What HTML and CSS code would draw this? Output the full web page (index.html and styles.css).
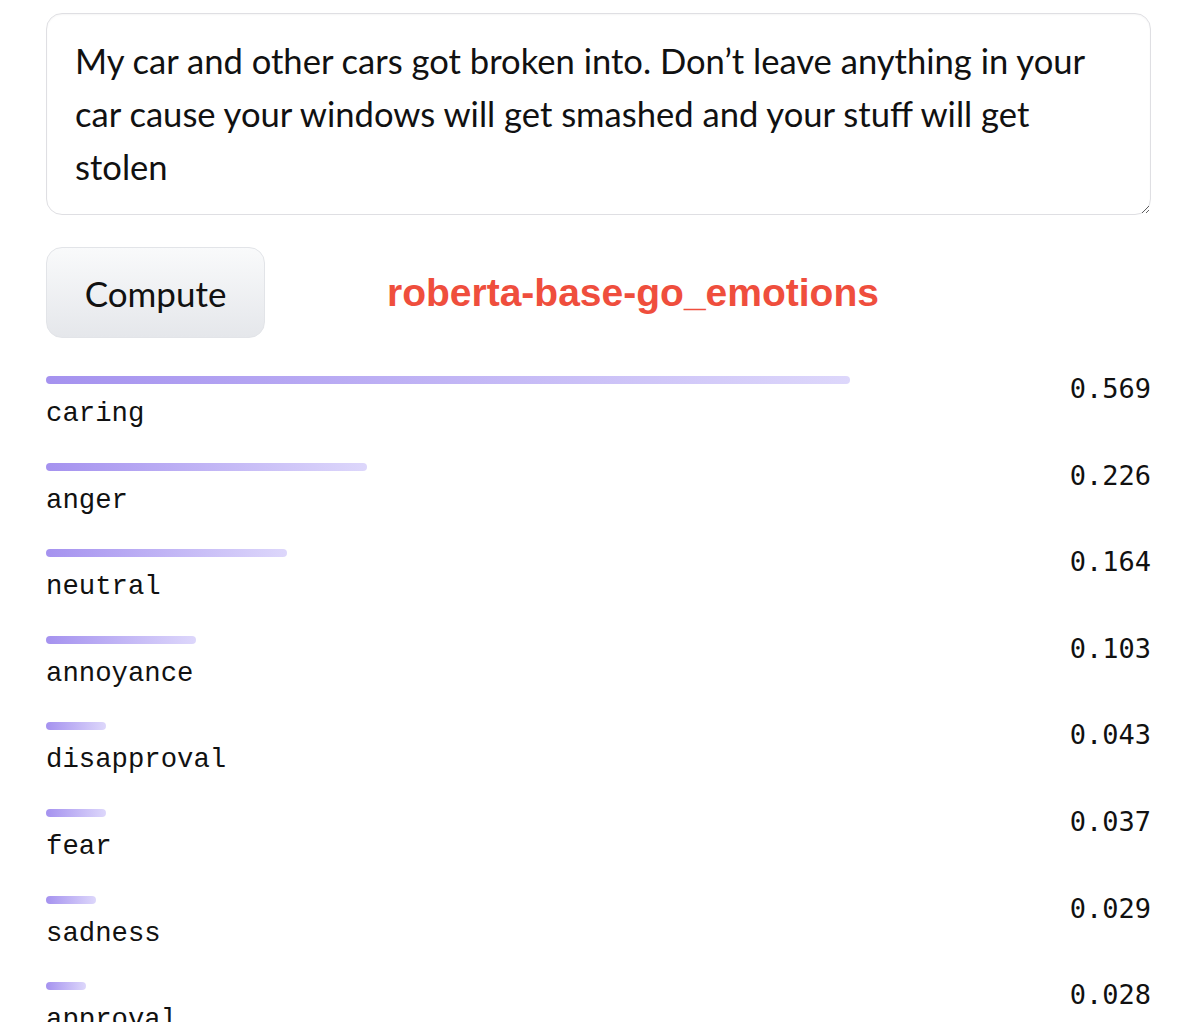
FILE: index.html
```html
<!DOCTYPE html>
<html lang="en">
<head>
<meta charset="utf-8">
<title>roberta-base-go_emotions</title>
<link rel="stylesheet" href="styles.css">
</head>
<body>
<main class="app">
  <textarea class="input" rows="3">My car and other cars got broken into. Don’t leave anything in your
car cause your windows will get smashed and your stuff will get
stolen</textarea>

  <div class="actions">
    <button class="btn" type="button">Compute</button>
    <h2 class="model">roberta-base-go_emotions</h2>
  </div>

  <div class="labels">
    <div class="row">
      <div class="info"><div class="bar" style="width:804px"></div><div class="name">caring</div></div>
      <div class="value">0.569</div>
    </div>
    <div class="row">
      <div class="info"><div class="bar" style="width:321px"></div><div class="name">anger</div></div>
      <div class="value">0.226</div>
    </div>
    <div class="row">
      <div class="info"><div class="bar" style="width:241px"></div><div class="name">neutral</div></div>
      <div class="value">0.164</div>
    </div>
    <div class="row">
      <div class="info"><div class="bar" style="width:150px"></div><div class="name">annoyance</div></div>
      <div class="value">0.103</div>
    </div>
    <div class="row">
      <div class="info"><div class="bar" style="width:60px"></div><div class="name">disapproval</div></div>
      <div class="value">0.043</div>
    </div>
    <div class="row">
      <div class="info"><div class="bar" style="width:60px"></div><div class="name">fear</div></div>
      <div class="value">0.037</div>
    </div>
    <div class="row">
      <div class="info"><div class="bar" style="width:50px"></div><div class="name">sadness</div></div>
      <div class="value">0.029</div>
    </div>
    <div class="row">
      <div class="info"><div class="bar" style="width:40px"></div><div class="name">approval</div></div>
      <div class="value">0.028</div>
    </div>
  </div>
</main>
</body>
</html>
```

FILE: styles.css
```css
html, body {
  margin: 0;
  padding: 0;
  background: #ffffff;
}

.app {
  width: 1105px;
  margin-left: 46px;
  padding-top: 13px;
  display: flex;
  flex-direction: column;
}

.input {
  box-sizing: border-box;
  width: 1105px;
  height: 202px;
  margin: 0;
  padding: 20px 28px;
  border: 1.5px solid #dfdfe3;
  border-radius: 16px;
  box-shadow: inset 0 1px 2px rgba(0,0,0,0.04);
  font-family: "Lato", "Open Sans", sans-serif;
  font-size: 34.6px;
  line-height: 53px;
  color: #111;
  white-space: pre-wrap;
  resize: vertical;
  outline: none;
  overflow: hidden;
}

.actions {
  display: flex;
  align-items: center;
  margin-top: 32px;
}

.btn {
  box-sizing: border-box;
  width: 219px;
  height: 91px;
  border: 1.5px solid #e2e4e8;
  border-radius: 16px;
  background: linear-gradient(to bottom, #f9fafb, #e5e7eb);
  font-family: "Lato", "Open Sans", sans-serif;
  font-size: 35px;
  color: #111;
  padding: 0;
}

.model {
  margin: 0 0 0 122px;
  font-family: "Liberation Sans", Arial, sans-serif;
  font-weight: 700;
  font-size: 39px;
  color: #ef4e3d;
}

.labels {
  display: flex;
  flex-direction: column;
  gap: 32.6px;
  margin-top: 38px;
}

.row {
  display: flex;
  justify-content: space-between;
  align-items: flex-start;
}

.info {
  display: flex;
  flex-direction: column;
}

.bar {
  height: 8px;
  border-radius: 4px;
  background: linear-gradient(to right, #a592ef, #ddd7fb);
}

.name {
  margin-top: 14px;
  font-family: "Liberation Mono", monospace;
  font-size: 27.3px;
  line-height: 32px;
  color: #111;
}

.value {
  font-family: "DejaVu Sans Mono", monospace;
  font-size: 27px;
  line-height: 24px;
  margin-top: 1px;
  color: #111;
}
```
